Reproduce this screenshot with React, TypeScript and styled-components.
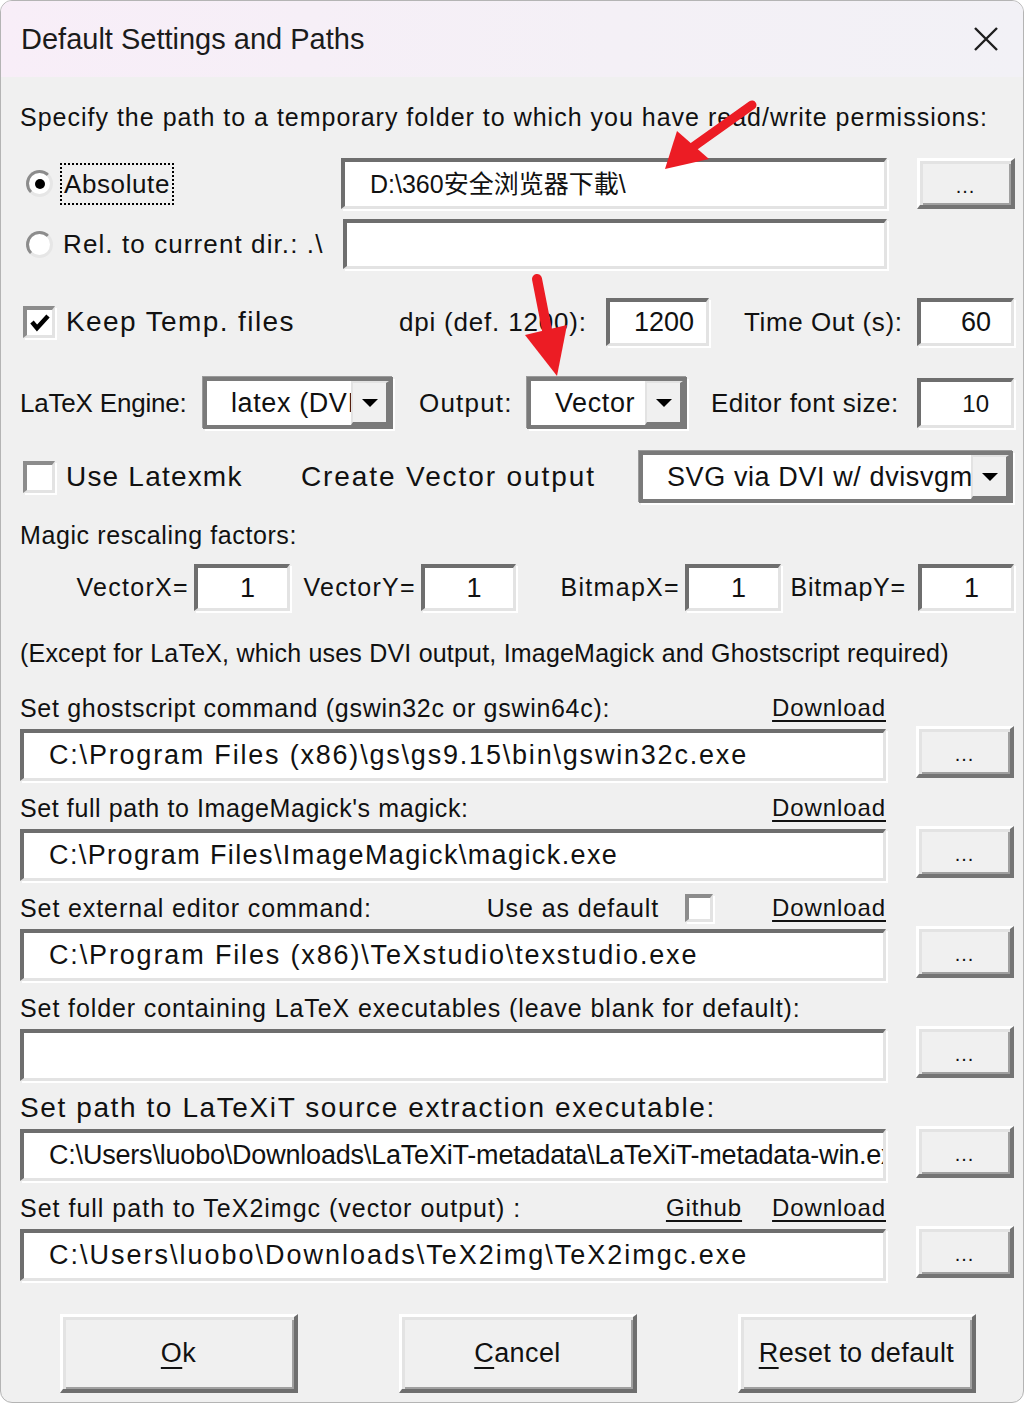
import React from 'react';
import styled, { createGlobalStyle } from 'styled-components';

const GlobalStyle = createGlobalStyle`
    html, body {
        margin: 0;
        padding: 0;
        background: #ffffff;
    }
    * {
        box-sizing: border-box;
    }
`

const Dialog = styled.div`
    position: relative;
    width: 1024px;
    height: 1403px;
    border: 1px solid #b4b4b4;
    border-radius: 12px;
    overflow: hidden;
    background: #f0f0f0;
    font-family: "Liberation Sans", Arial, sans-serif;
    color: #111;
`

const TitleBar = styled.div`
    height: 76px;
    display: flex;
    align-items: center;
    justify-content: space-between;
    padding: 0 24px 0 20px;
    background: linear-gradient(90deg, #f8eef8 0%, #f4f0f6 60%, #f2f1f6 100%);
`

const Title = styled.div`
    font-size: 29px;
    color: #1b1b1b;
`

const Body = styled.div`
    display: flex;
    flex-direction: column;
    padding: 0 0 0 19px;
`

const Row = styled.div<{ $h: number; $mt: number }>`
    display: flex;
    align-items: center;
    height: ${(p) => p.$h}px;
    margin-top: ${(p) => p.$mt}px;
`

const Cell = styled.div<{ $w: number; $pl?: number; $end?: boolean }>`
    display: flex;
    align-items: center;
    justify-content: ${(p) => (p.$end ? 'flex-end' : 'flex-start')};
    width: ${(p) => p.$w}px;
    padding-left: ${(p) => p.$pl || 0}px;
    padding-right: ${(p) => (p.$end ? 5 : 0)}px;
    height: 100%;
    flex-shrink: 0;
`

const Text = styled.span<{ $size?: number; $ls?: number; $ml?: number }>`
    font-size: ${(p) => p.$size || 25}px;
    letter-spacing: ${(p) => p.$ls || 0}px;
    margin-left: ${(p) => p.$ml || 0}px;
    white-space: nowrap;
    line-height: 1;
`

const Focus = styled.span`
    margin-left: 7px;
    padding: 8px 4px;
    outline: 2px dotted #000;
    outline-offset: -2px;
    font-size: 26px;
    letter-spacing: 0.6px;
    line-height: 1;
`

const Field = styled.div<{ $w: number; $h?: number; $align?: string; $mt?: number }>`
    width: ${(p) => p.$w}px;
    height: ${(p) => p.$h || 52}px;
    margin-top: ${(p) => p.$mt || 0}px;
    flex-shrink: 0;
    display: flex;
    align-items: center;
    justify-content: ${(p) => p.$align || 'flex-start'};
    padding: 0 24px 0 25px;
    background: #fff;
    border-style: solid;
    border-width: 4px 3px 3px 4px;
    border-color: #6e6e6e #e3e3e3 #e3e3e3 #6e6e6e;
    box-shadow: 2px 2px 0 #ffffff;
    overflow: hidden;
    font-size: 27px;
    line-height: 1;
    white-space: nowrap;
`

const Browse = styled.div<{ $h?: number; $mt?: number }>`
    width: 98px;
    height: ${(p) => p.$h || 52}px;
    margin-left: 30px;
    margin-top: ${(p) => p.$mt || 0}px;
    flex-shrink: 0;
    display: flex;
    align-items: center;
    justify-content: center;
    padding-top: 6px;
    background: #f0f0f0;
    border-style: solid;
    border-width: 3px 4px 4px 3px;
    border-color: #ffffff #747474 #747474 #ffffff;
    box-shadow: inset 3px 3px 0 #e3e3e3, inset -2px -2px 0 #a0a0a0;
    font-size: 20px;
    letter-spacing: 1px;
`

const Radio = styled.span<{ $on?: boolean }>`
    position: relative;
    width: 27px;
    height: 27px;
    margin-left: 6px;
    border-radius: 50%;
    background: #fff;
    border: 3px solid;
    border-color: #8c8c8c #e6e6e6 #e6e6e6 #8c8c8c;
    flex-shrink: 0;
    &::after {
        content: '';
        display: ${(p) => (p.$on ? 'block' : 'none')};
        position: absolute;
        left: 6px;
        top: 6px;
        width: 10px;
        height: 10px;
        border-radius: 50%;
        background: #000;
    }
`

const Check = styled.span<{ $size?: number; $ml?: number }>`
    display: flex;
    align-items: center;
    justify-content: center;
    width: ${(p) => p.$size || 32}px;
    height: ${(p) => p.$size || 32}px;
    margin-left: ${(p) => (p.$ml === undefined ? 3 : p.$ml)}px;
    background: #fff;
    border-style: solid;
    border-width: 4px 3px 3px 4px;
    border-color: #8c8c8c #e3e3e3 #e3e3e3 #8c8c8c;
    box-shadow: 2px 2px 0 #fff;
    flex-shrink: 0;
`

const Combo = styled.div<{ $w: number }>`
    width: ${(p) => p.$w}px;
    height: 52px;
    flex-shrink: 0;
    display: flex;
    align-items: stretch;
    background: #fff;
    border: 4px solid #7a7a7a;
    box-shadow: -1px -1px 0 #9a9a9a, 2px 2px 0 #fff;
`

const ComboText = styled.div`
    flex: 1;
    display: flex;
    align-items: center;
    padding-left: 24px;
    overflow: hidden;
    white-space: nowrap;
    font-size: 27px;
    letter-spacing: 0.6px;
    line-height: 1;
`

const ComboArrow = styled.div`
    width: 38px;
    flex-shrink: 0;
    display: flex;
    align-items: center;
    justify-content: center;
    background: #f0f0f0;
    border-style: solid;
    border-width: 2px 3px 3px 2px;
    border-color: #e3e3e3 #7a7a7a #7a7a7a #e3e3e3;
    &::after {
        content: '';
        border-left: 8px solid transparent;
        border-right: 8px solid transparent;
        border-top: 8px solid #000;
    }
`

const PathBlock = styled.div<{ $mt: number }>`
    display: flex;
    flex-direction: column;
    margin-top: ${(p) => p.$mt}px;
`

const PathLabel = styled.div`
    display: flex;
    align-items: center;
    width: 866px;
    height: 34px;
`

const Grow = styled.div`
    flex: 1;
`

const DlLink = styled.span<{ $mr?: number }>`
    margin-right: ${(p) => p.$mr || 0}px;
    font-size: 24px;
    letter-spacing: 0.9px;
    text-decoration: underline;
    text-decoration-thickness: 2px;
    text-underline-offset: 4px;
    white-space: nowrap;
    line-height: 1;
    color: #111;
`

const PathRow = styled.div`
    display: flex;
    align-items: flex-start;
    height: 56px;
`

const ButtonBar = styled.div`
    display: flex;
    gap: 101px;
    margin-top: 33px;
    padding-left: 40px;
`

const PushButton = styled.div`
    width: 238px;
    height: 79px;
    display: flex;
    align-items: center;
    justify-content: center;
    background: #f0f0f0;
    border-style: solid;
    border-width: 3px 4px 4px 3px;
    border-color: #ffffff #6e6e6e #6e6e6e #ffffff;
    box-shadow: inset 3px 3px 0 #e3e3e3, inset -2px -2px 0 #a0a0a0;
    font-size: 27px;
    letter-spacing: 0.4px;
    line-height: 1;
    & u {
        text-decoration-thickness: 2px;
        text-underline-offset: 5px;
    }
`

const Marks = styled.svg`
    position: absolute;
    left: 0;
    top: 0;
    pointer-events: none;
`

function CloseIcon() {
    return (
        <svg width="26" height="26" viewBox="0 0 26 26">
            <path d="M2 2 L24 24 M24 2 L2 24" stroke="#1e1e1e" strokeWidth="2.4" />
        </svg>
    );
}

function Tick() {
    return (
        <svg width="20" height="18" viewBox="0 0 20 18">
            <path d="M2 8 L7 14 L18 2" stroke="#000" strokeWidth="4.5" fill="none" strokeLinejoin="miter" />
        </svg>
    );
}

interface PathProps {
    label: string;
    value: string;
    mt: number;
    size?: number;
    ls?: number;
    extra?: React.ReactNode;
    valueLs?: number;
    noLink?: boolean;
}

function PathSetting(props: PathProps) {
    return (
        <PathBlock $mt={props.mt}>
            <PathLabel>
                <Text $size={props.size || 25} $ls={props.ls === undefined ? 0.8 : props.ls}>{props.label}</Text>
                <Grow />
                {props.extra}
                {!props.noLink && <DlLink>Download</DlLink>}
            </PathLabel>
            <PathRow>
                <Field $w={866} $mt={4} style={{ letterSpacing: `${props.valueLs === undefined ? 1.8 : props.valueLs}px` }}>
                    {props.value}
                </Field>
                <Browse $mt={1}>...</Browse>
            </PathRow>
        </PathBlock>
    );
}

function App() {
    return (
        <>
            <GlobalStyle />
            <Dialog>
                <TitleBar>
                    <Title>Default Settings and Paths</Title>
                    <CloseIcon />
                </TitleBar>
                <Body>
                    <Row $h={40} $mt={20}>
                        <Text $size={25} $ls={1.0}>Specify the path to a temporary folder to which you have read/write permissions:</Text>
                    </Row>
                    <Row $h={51} $mt={21}>
                        <Cell $w={321}>
                            <Radio $on />
                            <Focus>Absolute</Focus>
                        </Cell>
                        <Field $w={546} $h={51} style={{ fontFamily: '"Liberation Sans", "Noto Sans CJK SC", sans-serif', fontSize: '25px' }}>
                            D:\360安全浏览器下載\
                        </Field>
                        <Browse $h={51}>...</Browse>
                    </Row>
                    <Row $h={50} $mt={10}>
                        <Cell $w={323}>
                            <Radio />
                            <Text $size={26} $ls={1.1} $ml={10}>Rel. to current dir.: .\</Text>
                        </Cell>
                        <Field $w={544} $h={50} />
                    </Row>
                    <Row $h={48} $mt={29}>
                        <Cell $w={379}>
                            <Check><Tick /></Check>
                            <Text $size={28} $ls={1.4} $ml={11}>Keep Temp. files</Text>
                        </Cell>
                        <Cell $w={207}>
                            <Text $size={26} $ls={0.8}>dpi (def. 1200):</Text>
                        </Cell>
                        <Field $w={103} $h={48} $align="flex-end" style={{ paddingRight: 12 }}>1200</Field>
                        <Cell $w={208} $pl={35}>
                            <Text $size={26} $ls={0.6}>Time Out (s):</Text>
                        </Cell>
                        <Field $w={97} $h={48} $align="flex-end" style={{ paddingRight: 20 }}>60</Field>
                    </Row>
                    <Row $h={52} $mt={31}>
                        <Cell $w={183}>
                            <Text $size={26} $ls={-0.2}>LaTeX Engine:</Text>
                        </Cell>
                        <Combo $w={190}>
                            <ComboText>latex (DVI)</ComboText>
                            <ComboArrow />
                        </Combo>
                        <Cell $w={134} $pl={26}>
                            <Text $size={26} $ls={1.2}>Output:</Text>
                        </Cell>
                        <Combo $w={160}>
                            <ComboText>Vector</ComboText>
                            <ComboArrow />
                        </Combo>
                        <Cell $w={230} $pl={24}>
                            <Text $size={26} $ls={0.5}>Editor font size:</Text>
                        </Cell>
                        <Field $w={97} $h={50} $align="flex-end" style={{ paddingRight: 22, fontSize: 24 }}>10</Field>
                    </Row>
                    <Row $h={52} $mt={22}>
                        <Cell $w={281}>
                            <Check />
                            <Text $size={28} $ls={1.2} $ml={11}>Use Latexmk</Text>
                        </Cell>
                        <Cell $w={338}>
                            <Text $size={28} $ls={1.9}>Create Vector output</Text>
                        </Cell>
                        <Combo $w={374}>
                            <ComboText>SVG via DVI w/ dvisvgm</ComboText>
                            <ComboArrow />
                        </Combo>
                    </Row>
                    <Row $h={32} $mt={16}>
                        <Text $size={25} $ls={0.6}>Magic rescaling factors:</Text>
                    </Row>
                    <Row $h={47} $mt={13}>
                        <Cell $w={174} $end>
                            <Text $size={25} $ls={1.3}>VectorX=</Text>
                        </Cell>
                        <Field $w={96} $h={47} $align="center" style={{ paddingLeft: 30, paddingRight: 20 }}>1</Field>
                        <Cell $w={131} $end>
                            <Text $size={25} $ls={1.3}>VectorY=</Text>
                        </Cell>
                        <Field $w={95} $h={47} $align="center" style={{ paddingLeft: 30, paddingRight: 20 }}>1</Field>
                        <Cell $w={169} $end>
                            <Text $size={25} $ls={1.3}>BitmapX=</Text>
                        </Cell>
                        <Field $w={96} $h={47} $align="center" style={{ paddingLeft: 30, paddingRight: 20 }}>1</Field>
                        <Cell $w={137} $end style={{ paddingRight: 12 }}>
                            <Text $size={25} $ls={0.8}>BitmapY=</Text>
                        </Cell>
                        <Field $w={96} $h={47} $align="center" style={{ paddingLeft: 30, paddingRight: 20 }}>1</Field>
                    </Row>
                    <Row $h={30} $mt={27}>
                        <Text $size={25} $ls={0.2}>(Except for LaTeX, which uses DVI output, ImageMagick and Ghostscript required)</Text>
                    </Row>

                    <PathSetting mt={23} label="Set ghostscript command (gswin32c or gswin64c):" ls={0.7}
                        value="C:\Program Files (x86)\gs\gs9.15\bin\gswin32c.exe" />
                    <PathSetting mt={10} label="Set full path to ImageMagick's magick:" ls={0.6}
                        value="C:\Program Files\ImageMagick\magick.exe" valueLs={1.4} />
                    <PathSetting mt={10} label="Set external editor command:" ls={0.9}
                        value="C:\Program Files (x86)\TeXstudio\texstudio.exe" valueLs={1.85}
                        extra={
                            <>
                                <Text $size={25} $ls={0.9}>Use as default</Text>
                                <Check $size={28} $ml={26} style={{ marginRight: 59 }} />
                            </>
                        } />
                    <PathSetting mt={10} label="Set folder containing LaTeX executables (leave blank for default):" ls={0.9} value="" noLink />
                    <PathSetting mt={10} label="Set path to LaTeXiT source extraction executable:" size={28} ls={1.6} noLink
                        value="C:\Users\luobo\Downloads\LaTeXiT-metadata\LaTeXiT-metadata-win.exe" valueLs={-0.2} />
                    <PathSetting mt={10} label="Set full path to TeX2imgc (vector output) :" ls={1.0}
                        value="C:\Users\luobo\Downloads\TeX2img\TeX2imgc.exe" valueLs={2.0}
                        extra={<DlLink $mr={30}>Github</DlLink>} />

                    <ButtonBar>
                        <PushButton><span><u>O</u>k</span></PushButton>
                        <PushButton><span><u>C</u>ancel</span></PushButton>
                        <PushButton><span><u>R</u>eset to default</span></PushButton>
                    </ButtonBar>
                </Body>

                <Marks width="1024" height="1403" viewBox="0 0 1024 1403">
                    <path d="M751 104 L692 146" stroke="#ec1c24" strokeWidth="9" strokeLinecap="round" />
                    <path d="M664 168 L676 130 L708 158 Z" fill="#ec1c24" />
                    <path d="M536 278 L547 334" stroke="#ec1c24" strokeWidth="10" strokeLinecap="round" />
                    <path d="M556 375 L524 334 L566 324 Z" fill="#ec1c24" />
                </Marks>
            </Dialog>
        </>
    );
}

export default App;
